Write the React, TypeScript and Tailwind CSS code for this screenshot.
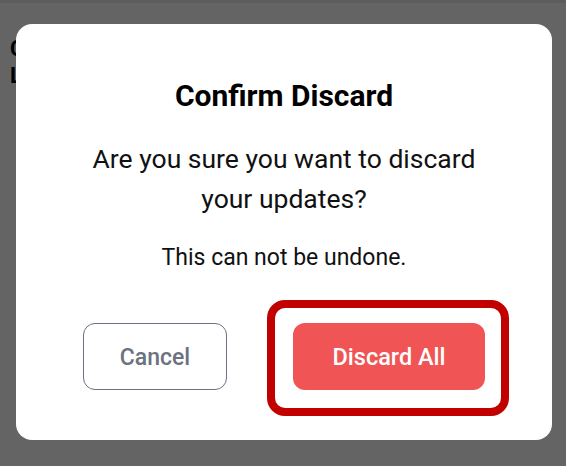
import * as React from "react"

export default function App() {
  return (
    <div className="relative h-[466px] w-[566px] overflow-hidden bg-[#646464] font-['Roboto',sans-serif]">
      <div className="h-[3px] bg-[#5c5c5c]" />

      {/* page behind the overlay */}
      <div className="pl-[10px] pt-[32px] text-[22px] font-bold leading-[27px] text-black">
        <p>Changes</p>
        <p>Last saved</p>
      </div>

      {/* dialog */}
      <div className="absolute left-[16px] top-[24px] flex h-[416px] w-[536px] flex-col items-center rounded-[16px] bg-white pt-[54px]">
        <h2 className="text-[30px] font-bold leading-[36px] text-black">Confirm Discard</h2>
        <p className="mt-[25px] text-center text-[26.5px] leading-[40px] text-[#111]">
          Are you sure you want to discard
          <br />
          your updates?
        </p>
        <p className="mt-[25px] text-[23px] leading-[28px] text-[#111]">This can not be undone.</p>

        <div className="mt-[51px] flex gap-[66px]">
          <button className="h-[67px] w-[144px] rounded-[12px] border-[1.5px] border-[#6b7280] pt-[3px] text-[23px] font-medium text-[#6b7280]">
            Cancel
          </button>
          <div className="relative">
            <button className="h-[67px] w-[192px] rounded-[12px] bg-[#f05454] pt-[2px] text-[23.5px] font-medium text-white">
              Discard All
            </button>
            <div className="pointer-events-none absolute -bottom-[26px] -left-[26px] -right-[24px] -top-[23px] rounded-[18px] border-[8px] border-[#c10000]" />
          </div>
        </div>
      </div>
    </div>
  )
}
